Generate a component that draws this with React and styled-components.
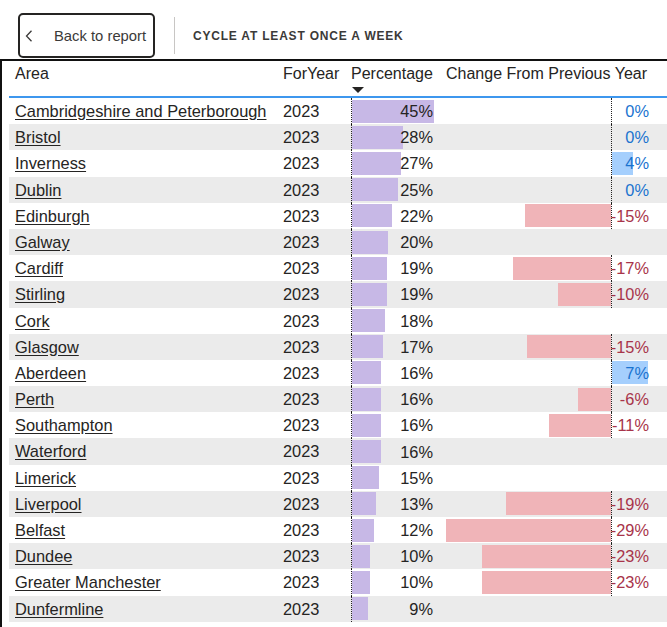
import styled, { createGlobalStyle } from "styled-components";

const GlobalStyle = createGlobalStyle`
  html, body {
    margin: 0;
    padding: 0;
    background: #ffffff;
  }
  body {
    font-family: "Liberation Sans", Arial, sans-serif;
    color: #252423;
  }
`;

const rows = [
  { area: "Cambridgeshire and Peterborough", year: 2023, pct: 45, change: 0 },
  { area: "Bristol", year: 2023, pct: 28, change: 0 },
  { area: "Inverness", year: 2023, pct: 27, change: 4 },
  { area: "Dublin", year: 2023, pct: 25, change: 0 },
  { area: "Edinburgh", year: 2023, pct: 22, change: -15, raw: -15.1 },
  { area: "Galway", year: 2023, pct: 20, change: null },
  { area: "Cardiff", year: 2023, pct: 19, change: -17, raw: -17.2 },
  { area: "Stirling", year: 2023, pct: 19, change: -10, raw: -9.3 },
  { area: "Cork", year: 2023, pct: 18, change: null },
  { area: "Glasgow", year: 2023, pct: 17, change: -15, raw: -14.7 },
  { area: "Aberdeen", year: 2023, pct: 16, change: 7 },
  { area: "Perth", year: 2023, pct: 16, change: -6, raw: -5.8 },
  { area: "Southampton", year: 2023, pct: 16, change: -11, raw: -10.9 },
  { area: "Waterford", year: 2023, pct: 16, change: null },
  { area: "Limerick", year: 2023, pct: 15, change: null },
  { area: "Liverpool", year: 2023, pct: 13, change: -19, raw: -18.4 },
  { area: "Belfast", year: 2023, pct: 12, change: -29, raw: -28.9 },
  { area: "Dundee", year: 2023, pct: 10, change: -23, raw: -22.6 },
  { area: "Greater Manchester", year: 2023, pct: 10, change: -23, raw: -22.6 },
  { area: "Dunfermline", year: 2023, pct: 9, change: null },
];

const COLS = "268px 74px 83px 12px 206px 3px";

const Page = styled.div`
  width: 667px;
  height: 627px;
  overflow: hidden;
`;

const TopBar = styled.div`
  display: flex;
  align-items: center;
  height: 59px;
  padding: 0 0 0 18px;
  box-sizing: border-box;
`;

const BackButton = styled.button`
  display: flex;
  align-items: center;
  width: 137px;
  height: 45px;
  margin-top: 12px;
  padding: 0 0 0 5px;
  box-sizing: border-box;
  border: 2px solid #252423;
  border-radius: 5px;
  background: #ffffff;
  font-family: "Liberation Sans", Arial, sans-serif;
  font-size: 14.8px;
  color: #3b3a39;
  cursor: pointer;

  svg {
    margin-right: 21px;
  }
`;

const Divider = styled.div`
  width: 1px;
  height: 37px;
  margin: 12px 18px 0 19px;
  background: #c8c6c4;
`;

const Title = styled.div`
  margin-top: 12px;
  font-size: 12px;
  font-weight: 700;
  letter-spacing: 0.8px;
  color: #3b3a39;
`;

const Table = styled.div`
  border-top: 2px solid #111;
  border-left: 2px solid #111;
  padding: 0 0 0 7px;
  height: 566px;
`;

const HeaderRow = styled.div`
  display: grid;
  grid-template-columns: ${COLS};
  height: 37px;
  border-bottom: 2px solid #3d97ee;
  box-sizing: border-box;
  font-size: 16px;
  color: #252423;
`;

const HeadCell = styled.div`
  position: relative;
  padding: 4px 0 0 ${(p) => p.$pad || 0}px;
  white-space: nowrap;
`;

const SortArrow = styled.span`
  position: absolute;
  left: 1px;
  top: 26px;
  width: 0;
  height: 0;
  border-left: 6px solid transparent;
  border-right: 6px solid transparent;
  border-top: 6px solid #252423;
`;

const Row = styled.div`
  display: grid;
  grid-template-columns: ${COLS};
  height: 26.2px;
  background: ${(p) => (p.$alt ? "#ebebeb" : "#ffffff")};
  font-size: 16.4px;
  line-height: 26px;
`;

const AreaCell = styled.div`
  padding-left: 6px;
  white-space: nowrap;

  a {
    color: #252423;
    text-decoration: underline;
    text-underline-offset: 2px;
  }
`;

const YearCell = styled.div`
  padding-left: 6px;
`;

const PctCell = styled.div`
  display: grid;
  border-left: 1px dotted #252423;
  align-items: center;
`;

const PctBar = styled.div`
  grid-area: 1 / 1;
  justify-self: start;
  height: 23px;
  background: #c7b8e6;
`;

const PctText = styled.span`
  grid-area: 1 / 1;
  justify-self: end;
  margin-right: 1px;
`;

const ChangeCell = styled.div`
  display: grid;
  align-items: center;
`;

const Track = styled.div`
  grid-area: 1 / 1;
  display: flex;
  height: 100%;
`;

const NegZone = styled.div`
  width: 165px;
  display: flex;
  justify-content: flex-end;
  align-items: center;
`;

const PosZone = styled.div`
  flex: 1;
  display: flex;
  align-items: center;
  border-left: 1px dotted ${(p) => (p.$show ? "#252423" : "transparent")};
`;

const ChangeBar = styled.div`
  height: 23px;
  background: ${(p) => (p.$neg ? "#f0b4b8" : "#a5cffd")};
`;

const ChangeText = styled.span`
  grid-area: 1 / 1;
  justify-self: end;
  margin-right: 3px;
  color: ${(p) => (p.$neg ? "#a8344a" : "#1a73cf")};
`;

const Chevron = () => (
  <svg width="8" height="12" viewBox="0 0 8 12">
    <polyline points="6.5,0.8 1.5,6 6.5,11.2" fill="none" stroke="#3b3a39" strokeWidth="1.3" />
  </svg>
);

const App = () => {
  return (
    <Page>
      <GlobalStyle />
      <TopBar>
        <BackButton>
          <Chevron />
          Back to report
        </BackButton>
        <Divider />
        <Title>CYCLE AT LEAST ONCE A WEEK</Title>
      </TopBar>
      <Table>
        <HeaderRow>
          <HeadCell $pad={6}>Area</HeadCell>
          <HeadCell $pad={6}>ForYear</HeadCell>
          <HeadCell>
            Percentage
            <SortArrow />
          </HeadCell>
          <HeadCell />
          <HeadCell>Change From Previous Year</HeadCell>
          <HeadCell />
        </HeaderRow>
        {rows.map((r, i) => {
          const has = r.change !== null;
          const v = r.raw !== undefined ? r.raw : r.change;
          const neg = has && r.change < 0;
          return (
            <Row key={r.area} $alt={i % 2 === 1}>
              <AreaCell>
                <a href="#">{r.area}</a>
              </AreaCell>
              <YearCell>{r.year}</YearCell>
              <PctCell>
                <PctBar style={{ width: `${(r.pct / 45) * 82}px` }} />
                <PctText>{r.pct}%</PctText>
              </PctCell>
              <div />
              <ChangeCell>
                <Track>
                  <NegZone>
                    {neg && <ChangeBar $neg style={{ width: `${Math.abs(v) * 5.7}px` }} />}
                  </NegZone>
                  <PosZone $show={has}>
                    {has && v > 0 && <ChangeBar style={{ width: `${v * 5.2}px` }} />}
                  </PosZone>
                </Track>
                {has && <ChangeText $neg={neg}>{r.change}%</ChangeText>}
              </ChangeCell>
              <div />
            </Row>
          );
        })}
      </Table>
    </Page>
  );
};

export default App;
